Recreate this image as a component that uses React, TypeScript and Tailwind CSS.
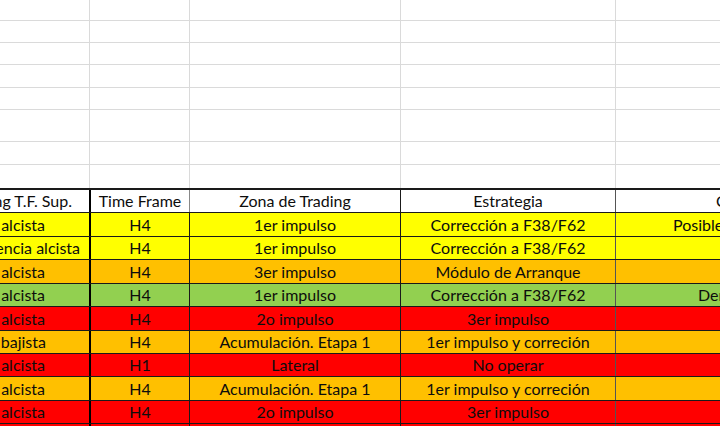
const YEL = "bg-[#ffff00]";
const ORG = "bg-[#ffc000]";
const GRN = "bg-[#92d050]";
const RED = "bg-[#ff0000]";

interface Row {
  bg: string;
  a: string;
  aPad: number;
  tf: string;
  zona: string;
  estr: string;
  e?: string;
  ePad?: number;
  h: string;
}

const rows: Row[] = [
  { bg: YEL, a: "alcista", aPad: 44, tf: "H4", zona: "1er impulso", estr: "Corrección a F38/F62", e: "Posible continuación", ePad: 57, h: "h-[24px]" },
  { bg: YEL, a: "Tendencia alcista", aPad: 9, tf: "H4", zona: "1er impulso", estr: "Corrección a F38/F62", h: "h-[23px]" },
  { bg: ORG, a: "alcista", aPad: 44, tf: "H4", zona: "3er impulso", estr: "Módulo de Arranque", h: "h-[24px]" },
  { bg: GRN, a: "alcista", aPad: 44, tf: "H4", zona: "1er impulso", estr: "Corrección a F38/F62", e: "Dentro de rango", ePad: 82, h: "h-[23px]" },
  { bg: RED, a: "alcista", aPad: 44, tf: "H4", zona: "2o impulso", estr: "3er impulso", h: "h-[24px]" },
  { bg: ORG, a: "bajista", aPad: 43, tf: "H4", zona: "Acumulación. Etapa 1", estr: "1er impulso y correción", h: "h-[23px]" },
  { bg: RED, a: "alcista", aPad: 44, tf: "H1", zona: "Lateral", estr: "No operar", h: "h-[23px]" },
  { bg: ORG, a: "alcista", aPad: 44, tf: "H4", zona: "Acumulación. Etapa 1", estr: "1er impulso y correción", h: "h-[24px]" },
  { bg: RED, a: "alcista", aPad: 44, tf: "H4", zona: "2o impulso", estr: "3er impulso", h: "h-[23px]" },
  { bg: RED, a: "alcista", aPad: 44, tf: "H4", zona: "3er impulso", estr: "No operar", h: "h-[23px]" },
];

const emptyHeights = ["h-[21px]", "h-[22px]", "h-[22px]", "h-[23px]", "h-[22px]", "h-[32px]", "h-[23px]"];

function EmptyRow({ h, last }: { h: string; last?: boolean }) {
  const line = last ? "" : "border-b border-[#dadada]";
  return (
    <div className={`flex ${h} ${line}`}>
      <div className="w-[90px] shrink-0 border-r border-[#dadada]" />
      <div className="w-[100px] shrink-0 border-r border-[#dadada]" />
      <div className="w-[211px] shrink-0 border-r border-[#dadada]" />
      <div className="w-[215px] shrink-0 border-r border-[#dadada]" />
      <div className="flex-1" />
    </div>
  );
}

function DataRow({ r }: { r: Row }) {
  return (
    <div className={`flex ${r.h} ${r.bg} border-b border-[#1a1a1a] shrink-0`}>
      <div
        className="w-[91px] shrink-0 border-r-2 border-black flex items-center justify-end overflow-hidden whitespace-nowrap"
        style={{ paddingRight: r.aPad }}
      >
        {r.a}
      </div>
      <div className="w-[99px] shrink-0 border-r border-[#1a1a1a] flex items-center justify-center">{r.tf}</div>
      <div className="w-[211px] shrink-0 border-r border-[#1a1a1a] flex items-center justify-center whitespace-nowrap">{r.zona}</div>
      <div className="w-[215px] shrink-0 border-r border-[#555] flex items-center justify-center whitespace-nowrap">{r.estr}</div>
      <div className="flex-1 flex items-center overflow-hidden whitespace-nowrap" style={{ paddingLeft: r.ePad ?? 0 }}>
        {r.e ?? ""}
      </div>
    </div>
  );
}

export default function App() {
  return (
    <div
      className="w-[720px] h-[426px] overflow-hidden bg-white text-[16px] leading-none text-[#0d0d0d]"
      style={{ fontFamily: "Lato, 'Open Sans', sans-serif" }}
    >
      {emptyHeights.map((h, i) => (
        <EmptyRow key={i} h={h} />
      ))}
      <EmptyRow h="h-[23px]" last />

      <div className="flex h-[25px] border-t-2 border-b border-[#1a1a1a] bg-white">
        <div className="w-[91px] shrink-0 border-r-2 border-black flex items-center justify-end pr-[17px] overflow-hidden whitespace-nowrap">
          Trading T.F. Sup.
        </div>
        <div className="w-[99px] shrink-0 border-r border-[#888] flex items-center justify-center">Time Frame</div>
        <div className="w-[211px] shrink-0 border-r border-[#1a1a1a] flex items-center justify-center">Zona de Trading</div>
        <div className="w-[215px] shrink-0 border-r border-[#555] flex items-center justify-center">Estrategia</div>
        <div className="flex-1 flex items-center pl-[100px] overflow-hidden whitespace-nowrap">Comentarios</div>
      </div>

      {rows.map((r, i) => (
        <DataRow key={i} r={r} />
      ))}
    </div>
  );
}
